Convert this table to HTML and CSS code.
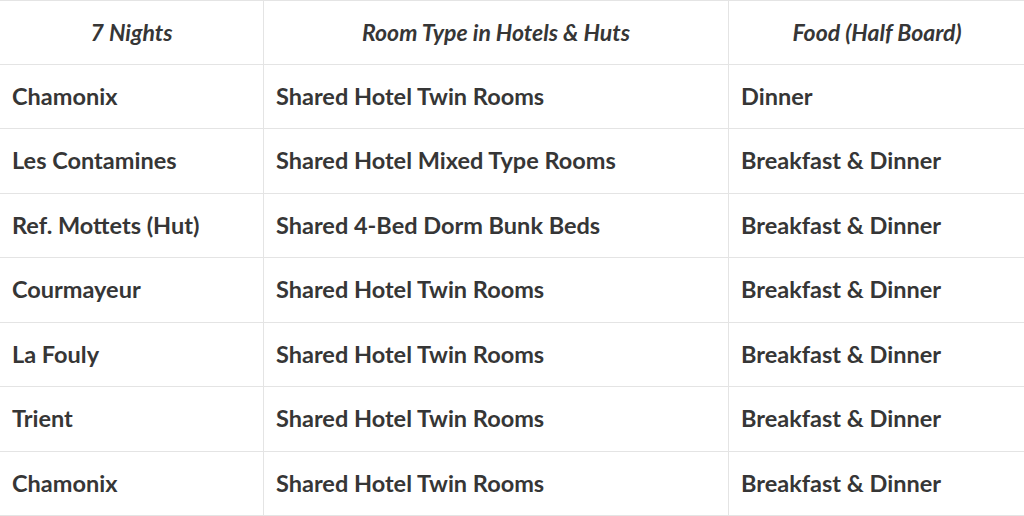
FILE: index.html
```html
<!DOCTYPE html>
<html>
<head>
<meta charset="utf-8">
<link rel="stylesheet" href="styles.css">
</head>
<body>
<table class="stay">
  <colgroup>
    <col class="c1"><col class="c2"><col class="c3">
  </colgroup>
  <thead>
    <tr><th>7 Nights</th><th>Room Type in Hotels &amp; Huts</th><th>Food (Half Board)</th></tr>
  </thead>
  <tbody>
    <tr><td>Chamonix</td><td>Shared Hotel Twin Rooms</td><td>Dinner</td></tr>
    <tr><td>Les Contamines</td><td>Shared Hotel Mixed Type Rooms</td><td>Breakfast &amp; Dinner</td></tr>
    <tr><td>Ref. Mottets (Hut)</td><td>Shared 4-Bed Dorm Bunk Beds</td><td>Breakfast &amp; Dinner</td></tr>
    <tr><td>Courmayeur</td><td>Shared Hotel Twin Rooms</td><td>Breakfast &amp; Dinner</td></tr>
    <tr><td>La Fouly</td><td>Shared Hotel Twin Rooms</td><td>Breakfast &amp; Dinner</td></tr>
    <tr><td>Trient</td><td>Shared Hotel Twin Rooms</td><td>Breakfast &amp; Dinner</td></tr>
    <tr><td>Chamonix</td><td>Shared Hotel Twin Rooms</td><td>Breakfast &amp; Dinner</td></tr>
  </tbody>
</table>
</body>
</html>
```

FILE: styles.css
```css
html, body {
  margin: 0;
  padding: 0;
  background: #ffffff;
  overflow: hidden;
}
.stay {
  border-collapse: collapse;
  table-layout: fixed;
  width: 1026px;
  margin-left: -1px;
  font-family: Lato, "Open Sans", sans-serif;
  color: #363636;
}
.c1 { width: 264px; }
.c2 { width: 465px; }
.c3 { width: 297px; }
.stay th, .stay td {
  border: 1px solid #e4e4e4;
  height: 64.5px;
  padding: 0 12px;
  box-sizing: border-box;
  vertical-align: middle;
}
.stay th {
  height: 63.5px;
  font-style: italic;
  font-weight: 700;
  font-size: 23px;
  text-align: center;
  padding-top: 0;
}
.stay td {
  font-weight: 700;
  font-size: 23.5px;
  text-align: left;
  padding-bottom: 1px;
}
```
